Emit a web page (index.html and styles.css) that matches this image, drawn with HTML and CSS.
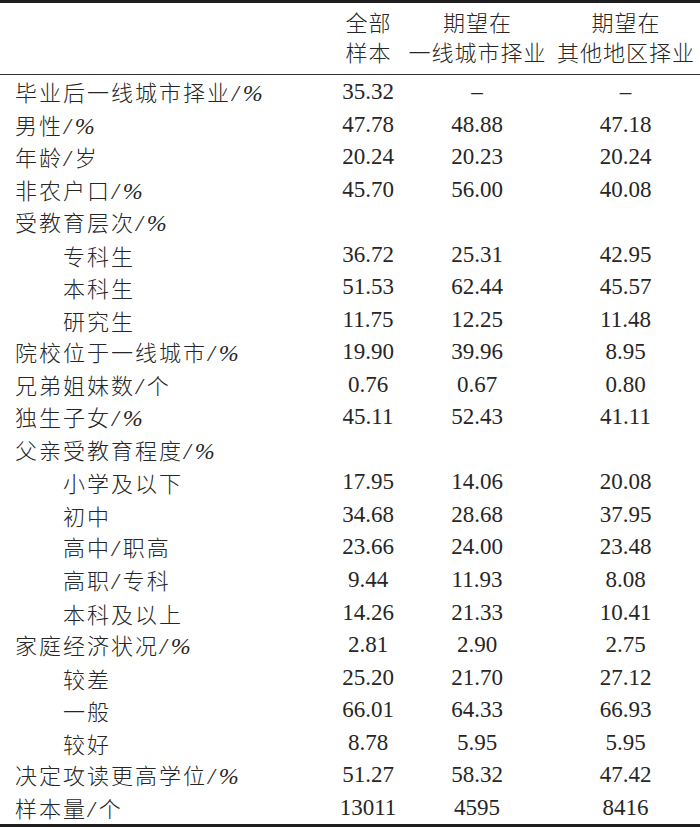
FILE: index.html
```html
<!DOCTYPE html>
<html lang="zh">
<head>
<meta charset="utf-8">
<link rel="stylesheet" href="styles.css">
</head>
<body>
<div class="table">
  <div class="row head">
    <div class="label"></div>
    <div class="hcell"><span>全部</span><span>样本</span></div>
    <div class="hcell"><span>期望在</span><span>一线城市择业</span></div>
    <div class="hcell"><span>期望在</span><span>其他地区择业</span></div>
  </div>
  <div class="body">
    <div class="row"><div class="label">毕业后一线城市择业<span class="sym">/%</span></div><div class="num">35.32</div><div class="num">–</div><div class="num">–</div></div>
    <div class="row"><div class="label">男性<span class="sym">/%</span></div><div class="num">47.78</div><div class="num">48.88</div><div class="num">47.18</div></div>
    <div class="row"><div class="label">年龄<span class="sym">/</span>岁</div><div class="num">20.24</div><div class="num">20.23</div><div class="num">20.24</div></div>
    <div class="row"><div class="label">非农户口<span class="sym">/%</span></div><div class="num">45.70</div><div class="num">56.00</div><div class="num">40.08</div></div>
    <div class="row"><div class="label">受教育层次<span class="sym">/%</span></div><div class="num"></div><div class="num"></div><div class="num"></div></div>
    <div class="row"><div class="label sub">专科生</div><div class="num">36.72</div><div class="num">25.31</div><div class="num">42.95</div></div>
    <div class="row"><div class="label sub">本科生</div><div class="num">51.53</div><div class="num">62.44</div><div class="num">45.57</div></div>
    <div class="row"><div class="label sub">研究生</div><div class="num">11.75</div><div class="num">12.25</div><div class="num">11.48</div></div>
    <div class="row"><div class="label">院校位于一线城市<span class="sym">/%</span></div><div class="num">19.90</div><div class="num">39.96</div><div class="num">8.95</div></div>
    <div class="row"><div class="label">兄弟姐妹数<span class="sym">/</span>个</div><div class="num">0.76</div><div class="num">0.67</div><div class="num">0.80</div></div>
    <div class="row"><div class="label">独生子女<span class="sym">/%</span></div><div class="num">45.11</div><div class="num">52.43</div><div class="num">41.11</div></div>
    <div class="row"><div class="label">父亲受教育程度<span class="sym">/%</span></div><div class="num"></div><div class="num"></div><div class="num"></div></div>
    <div class="row"><div class="label sub">小学及以下</div><div class="num">17.95</div><div class="num">14.06</div><div class="num">20.08</div></div>
    <div class="row"><div class="label sub">初中</div><div class="num">34.68</div><div class="num">28.68</div><div class="num">37.95</div></div>
    <div class="row"><div class="label sub">高中<span class="sym">/</span>职高</div><div class="num">23.66</div><div class="num">24.00</div><div class="num">23.48</div></div>
    <div class="row"><div class="label sub">高职<span class="sym">/</span>专科</div><div class="num">9.44</div><div class="num">11.93</div><div class="num">8.08</div></div>
    <div class="row"><div class="label sub">本科及以上</div><div class="num">14.26</div><div class="num">21.33</div><div class="num">10.41</div></div>
    <div class="row"><div class="label">家庭经济状况<span class="sym">/%</span></div><div class="num">2.81</div><div class="num">2.90</div><div class="num">2.75</div></div>
    <div class="row"><div class="label sub">较差</div><div class="num">25.20</div><div class="num">21.70</div><div class="num">27.12</div></div>
    <div class="row"><div class="label sub">一般</div><div class="num">66.01</div><div class="num">64.33</div><div class="num">66.93</div></div>
    <div class="row"><div class="label sub">较好</div><div class="num">8.78</div><div class="num">5.95</div><div class="num">5.95</div></div>
    <div class="row"><div class="label">决定攻读更高学位<span class="sym">/%</span></div><div class="num">51.27</div><div class="num">58.32</div><div class="num">47.42</div></div>
    <div class="row"><div class="label">样本量<span class="sym">/</span>个</div><div class="num">13011</div><div class="num">4595</div><div class="num">8416</div></div>
  </div>
</div>
</body>
</html>
```

FILE: styles.css
```css
html, body {
  margin: 0;
  padding: 0;
  background: #ffffff;
}

body {
  width: 700px;
  height: 827px;
  overflow: hidden;
  color: #262626;
  font-family: "Liberation Serif", "Noto Sans CJK SC", serif;
}

.table {
  width: 700px;
  height: 827px;
  box-sizing: border-box;
  border-top: 3px solid #1e1e1e;
  border-bottom: 3px solid #1e1e1e;
  display: flex;
  flex-direction: column;
}

.row {
  display: grid;
  grid-template-columns: 333px 70px 148px 149px;
  align-items: center;
}

.head {
  height: 72px;
  flex: none;
  border-bottom: 1px solid #333333;
  align-items: end;
  padding-bottom: 8px;
  box-sizing: border-box;
}

.hcell {
  display: flex;
  flex-direction: column;
  align-items: center;
  font-family: "Noto Sans CJK SC", sans-serif;
  font-size: 22px;
  font-weight: 300;
  line-height: 30px;
  letter-spacing: 1px;
  white-space: nowrap;
}

.hcell span {
  margin-right: -1px;
}

.body {
  flex: 1;
  display: flex;
  flex-direction: column;
  padding-top: 1px;
}

.body .row {
  flex: 1;
}

.label {
  padding-left: 15px;
  font-family: "Noto Sans CJK SC", sans-serif;
  font-size: 22px;
  font-weight: 300;
  letter-spacing: 2px;
  white-space: nowrap;
  line-height: 30px;
}

.label.sub {
  padding-left: 63px;
}

.sym {
  font-family: "Liberation Serif", serif;
  font-style: italic;
  font-size: 24px;
  letter-spacing: 4px;
  margin-left: 1px;
}

.num {
  text-align: center;
  font-family: "Liberation Serif", serif;
  font-size: 23px;
  line-height: 30px;
}
```
